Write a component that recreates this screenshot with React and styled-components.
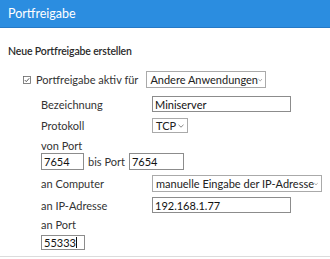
import * as React from 'react'
import styled, {createGlobalStyle} from 'styled-components'

const GlobalStyle = createGlobalStyle`
  html, body{
    margin: 0;
    padding: 0;
    background: #fff;
  }
  body{
    font-family: Lato, "Noto Sans", "Liberation Sans", sans-serif;
    color: #333;
  }
`

function Chevron(){
  return (
    <svg width="6" height="4" viewBox="0 0 6 4">
      <path d="M0.5 0.8 L3 3.2 L5.5 0.8" fill="none" stroke="#777" strokeWidth="0.9" />
    </svg>
  )
}

function CheckIcon(){
  return (
    <svg width="8" height="8" viewBox="0 0 8 8">
      <rect x="0.5" y="0.5" width="7" height="7" fill="none" stroke="#666" strokeWidth="0.8" />
      <path d="M1.8 4.1 L3.3 5.6 L6.2 2.3" fill="none" stroke="#444" strokeWidth="0.9" />
    </svg>
  )
}

function Select({width, height, children}){
  return (
    <StyledSelect width={width} height={height}>
      <span>{children}</span>
      <Chevron/>
    </StyledSelect>
  )
}

export default function App(){
  return (
    <>
      <GlobalStyle/>
      <Panel>
        <Header>Portfreigabe</Header>
        <Body>
          <Heading>Neue Portfreigabe erstellen</Heading>
          <CheckRow>
            <CheckIcon/>
            <CheckLabel>Portfreigabe aktiv für</CheckLabel>
            <Select width={120}>Andere Anwendungen</Select>
          </CheckRow>
          <Form>
            <Field mt={8}>
              <Label>Bezeichnung</Label>
              <Input width={139} height={16}>Miniserver</Input>
            </Field>
            <Field mt={6}>
              <Label>Protokoll</Label>
              <Select width={36} height={15}>TCP</Select>
            </Field>
            <Caption mt={6}>von Port</Caption>
            <Field>
              <Input width={43} height={17}>7654</Input>
              <Between>bis Port</Between>
              <Input width={55} height={17}>7654</Input>
            </Field>
            <Field mt={5}>
              <Label>an Computer</Label>
              <Select width={170}>manuelle Eingabe der IP-Adresse</Select>
            </Field>
            <Field mt={5}>
              <Label>an IP-Adresse</Label>
              <Input width={139} height={16}>192.168.1.77</Input>
            </Field>
            <Caption mt={5}>an Port</Caption>
            <Field mt={3}>
              <Input width={44} height={15}>55333<Caret/></Input>
            </Field>
          </Form>
        </Body>
      </Panel>
    </>
  )
}

const Panel = styled.div`
  width: 330px;
  height: 257px;
  border-bottom: 1px solid #dcdcdc;
  box-sizing: border-box;
  overflow: hidden;
`

const Header = styled.div`
  height: 28px;
  box-sizing: border-box;
  display: flex;
  align-items: center;
  padding-left: 8px;
  padding-bottom: 1px;
  background: #2b8de0;
  border-bottom: 1px solid #2679c6;
  color: #fff;
  font-size: 12.5px;
`

const Body = styled.div`
  padding-left: 8px;
`

const Heading = styled.div`
  margin-top: 16px;
  height: 14px;
  line-height: 14px;
  font-size: 10.5px;
  font-weight: 600;
  letter-spacing: -0.15px;
  color: #2a2a2a;
`

const CheckRow = styled.div`
  margin-top: 13px;
  height: 17px;
  padding-left: 15px;
  display: flex;
  align-items: center;
`

const CheckLabel = styled.span`
  margin-left: 5px;
  margin-right: 8px;
  font-size: 11px;
  color: #333;
`

const StyledSelect = styled.div`
  width: ${p => p.width}px;
  height: ${p => p.height || 17}px;
  box-sizing: border-box;
  border: 1px solid #aaa;
  background: #fff;
  display: flex;
  align-items: center;
  justify-content: space-between;
  padding: 0 3px 0 3px;
  font-size: 11px;
  color: #222;
  white-space: nowrap;
`

const Form = styled.div`
  padding-left: 33px;
  display: flex;
  flex-direction: column;
`

const Field = styled.div`
  margin-top: ${p => p.mt || 0}px;
  display: flex;
  align-items: center;
`

const Label = styled.div`
  width: 111px;
  flex: none;
  font-size: 11px;
  color: #333;
`

const Caption = styled.div`
  margin-top: ${p => p.mt || 0}px;
  height: 14px;
  line-height: 14px;
  font-size: 11px;
  color: #333;
`

const Between = styled.span`
  margin: 0 4px 0 4px;
  font-size: 11px;
  color: #333;
`

const Input = styled.div`
  width: ${p => p.width}px;
  height: ${p => p.height}px;
  box-sizing: border-box;
  border: 1px solid #8c8c8c;
  background: #fff;
  display: flex;
  align-items: center;
  padding-left: 2px;
  font-size: 11px;
  color: #111;
  white-space: nowrap;
`

const Caret = styled.span`
  display: inline-block;
  width: 1px;
  height: 11px;
  background: #111;
`
